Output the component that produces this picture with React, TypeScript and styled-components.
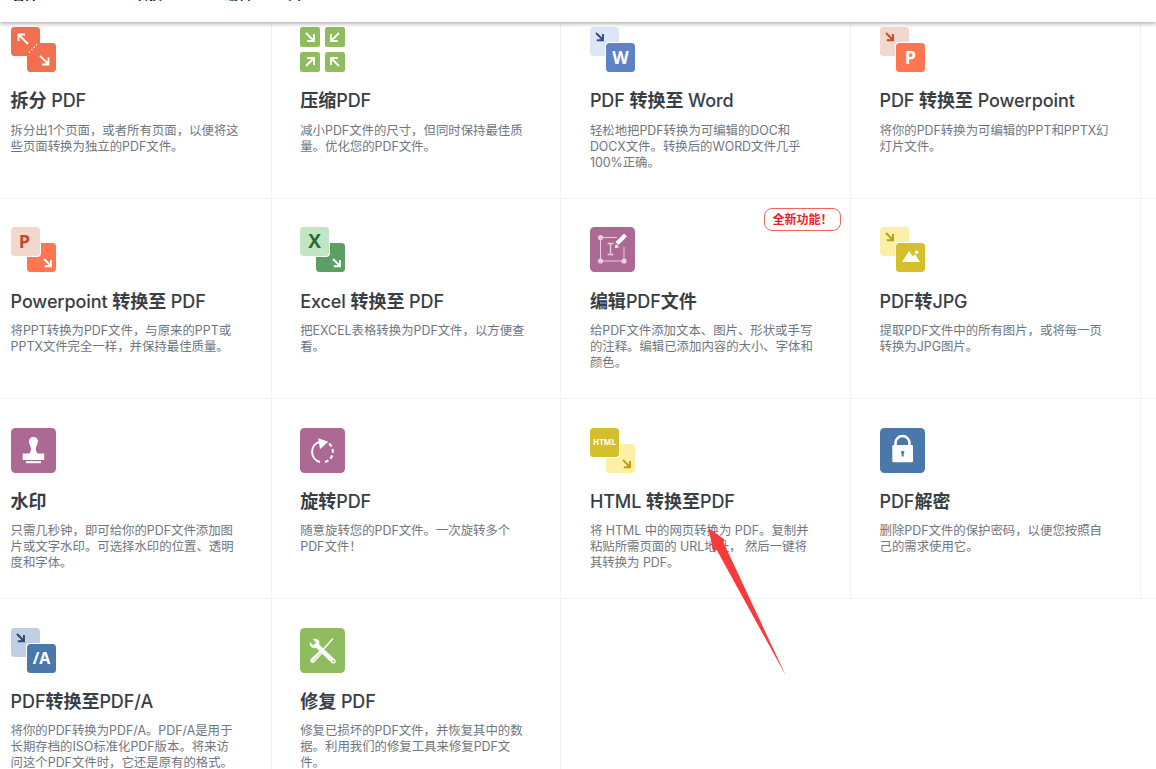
import React from 'react';
import styled, { createGlobalStyle } from 'styled-components';

const GlobalStyle = createGlobalStyle`
  html, body {
    margin: 0;
    padding: 0;
    height: 100%;
    background: #fff;
    overflow: hidden;
  }
  body {
    font-family: 'Inter', 'Noto Sans CJK SC', sans-serif;
  }
`;

const Page = styled.div`
  position: relative;
  width: 100%;
  height: 100vh;
  overflow: hidden;
`;

const Header = styled.header`
  position: relative;
  z-index: 2;
  height: 22px;
  display: flex;
  padding-left: 12px;
  background: #fff;
  box-shadow: 0 1px 5px rgba(0, 0, 0, 0.4);
  overflow: hidden;
`;

const NavItem = styled.span<{ $w: number }>`
  flex: none;
  width: ${(p) => p.$w}px;
  margin-top: -15px;
  font-size: 13px;
  line-height: 18px;
  font-weight: 700;
  color: #111;
`;

const Grid = styled.div`
  display: grid;
  grid-template-columns: repeat(5, 289.67px);
  grid-auto-rows: 200.2px;
  margin: -23.2px 0 0 -17.94px;
`;

const Cell = styled.div<{ $last?: boolean }>`
  position: relative;
  box-sizing: border-box;
  padding: 28.4px 20px 0 28.5px;
  border-right: 1px solid #f1f2f4;
  border-bottom: ${(p) => (p.$last ? 'none' : '1px solid #f1f2f4')};
`;

const Icon = styled.svg`
  display: block;
  width: 45px;
  height: 45px;
`;

const Title = styled.h3`
  margin: 17.25px 0 0;
  font-size: 18px;
  line-height: 24px;
  font-weight: 500;
  letter-spacing: -0.1px;
  color: #383e45;
  white-space: nowrap;
`;

const Cjk = styled.span`
  font-weight: 700;
  letter-spacing: 0;
`;

const Desc = styled.p`
  margin: 9.35px 0 0;
  font-size: 12.4px;
  line-height: 16px;
  color: #6f7680;
  white-space: pre;
`;

const Badge = styled.span`
  position: absolute;
  top: 9px;
  right: 9px;
  box-sizing: border-box;
  width: 77px;
  height: 23px;
  border: 1px solid #f4625a;
  border-radius: 8px;
  background: #fff;
  font-size: 12px;
  line-height: 21px;
  font-weight: 700;
  text-align: center;
  color: #ee1c25;
`;

const Annotation = styled.svg`
  position: absolute;
  z-index: 3;
  left: 700px;
  top: 520px;
  width: 95px;
  height: 165px;
`;

const IconLabel = styled.text<{ $size: number }>`
  font-family: 'Open Sans', sans-serif;
  font-size: ${(p) => p.$size}px;
  font-weight: 700;
  text-anchor: middle;
`;

// small diagonal arrow, points from top left to bottom right
const DownArrow = ({ x, y, color }: { x: number; y: number; color: string }) => (
  <path d={`M${x} ${y}l7 7M${x + 7} ${y + 1}v6.2h-6.2`} fill="none" stroke={color} strokeWidth="1.9" />
);

const Swap = ({ back, front, children }: { back: string; front: string; children: React.ReactNode }) => (
  <Icon viewBox="0 0 45 45">
    <rect width="29" height="29" rx="3.5" fill={back} />
    <rect x="15" y="15" width="30" height="30" rx="4" fill="#fff" />
    <rect x="16" y="16" width="29" height="29" rx="3.5" fill={front} />
    {children}
  </Icon>
);

// same as Swap, but the tile at the top left lies in front
const SwapOut = ({ back, front, arrow, children }: { back: string; front: string; arrow: string; children: React.ReactNode }) => (
  <Icon viewBox="0 0 45 45">
    <rect x="16" y="16" width="29" height="29" rx="3.5" fill={back} />
    <rect width="30" height="30" rx="4" fill="#fff" />
    <rect width="29" height="29" rx="3.5" fill={front} />
    <DownArrow x={33} y={32} color={arrow} />
    {children}
  </Icon>
);

const Flat = ({ color, children }: { color: string; children: React.ReactNode }) => (
  <Icon viewBox="0 0 45 45">
    <rect width="45" height="45" rx="4.5" fill={color} />
    {children}
  </Icon>
);

const SplitIcon = () => (
  <Icon viewBox="0 0 45 45">
    <rect width="29" height="29" rx="3.5" fill="#f2704f" />
    <rect x="16" y="16" width="29" height="29" rx="3.5" fill="#f2704f" />
    <path d="M7.5 7.5L17 17M7.5 14V7.5H14M29 29l8.5 8M37.5 30.5v7H31" fill="none" stroke="#fff" strokeWidth="1.8" />
    <path d="M18 25.5l8-8" fill="none" stroke="#fff" strokeWidth="1.2" strokeDasharray="1.4 2" />
  </Icon>
);

const CompressIcon = () => (
  <Icon viewBox="0 0 45 45">
    <rect width="20" height="20" rx="2.5" fill="#8fbc5e" />
    <rect x="25" width="20" height="20" rx="2.5" fill="#8fbc5e" />
    <rect y="25" width="20" height="20" rx="2.5" fill="#8fbc5e" />
    <rect x="25" y="25" width="20" height="20" rx="2.5" fill="#8fbc5e" />
    <path
      d="M6 6l8 8M14 7v7H7M39 6l-8 8M31 7v7h7M6 39l8-8M7 31h7v7M39 39l-8-8M38 31h-7v7"
      fill="none"
      stroke="#fff"
      strokeWidth="1.9"
    />
  </Icon>
);

const icons: Record<string, React.ReactNode> = {
  split: <SplitIcon />,
  compress: <CompressIcon />,
  word: (
    <Swap back="#dde5f8" front="#5f82c6">
      <DownArrow x={6} y={6} color="#2f4f8f" />
      <IconLabel $size={17} x="30.5" y="36.5" fill="#fff">W</IconLabel>
    </Swap>
  ),
  ppt: (
    <Swap back="#f2d8cc" front="#ff7650">
      <DownArrow x={6} y={6} color="#c9472a" />
      <IconLabel $size={18} x="30.5" y="37" fill="#fff">P</IconLabel>
    </Swap>
  ),
  pptOut: (
    <SwapOut back="#ff7650" front="#f2d8cc" arrow="#fff">
      <IconLabel $size={18} x="13.5" y="21" fill="#c9472a">P</IconLabel>
    </SwapOut>
  ),
  excelOut: (
    <SwapOut back="#5c9e63" front="#c2e5c4" arrow="#fff">
      <IconLabel $size={19} x="14.5" y="21" fill="#2a6e2e">X</IconLabel>
    </SwapOut>
  ),
  edit: (
    <Flat color="#ab6993">
      <path d="M10.5 10.5H27M10.5 10.5V34H34V20" fill="none" stroke="#e8cfdf" strokeWidth="1" />
      <circle cx="10.5" cy="10.5" r="2.6" fill="#e8cfdf" />
      <circle cx="10.5" cy="34" r="2.6" fill="#e8cfdf" />
      <circle cx="34" cy="34" r="2.6" fill="#e8cfdf" />
      <path d="M17.500 16.500h6M20.500 16.500v11M17.500 27.500h6" fill="none" stroke="#e8cfdf" strokeWidth="1.300" />
      <path d="M27 16.5L35.5 8" fill="none" stroke="#fff" strokeWidth="4" />
      <path d="M25 21l.8-4 3.2 3.2z" fill="#fff" />
    </Flat>
  ),
  jpg: (
    <Swap back="#fbf0a6" front="#d6bf2c">
      <DownArrow x={6} y={6} color="#b79f10" />
      <path d="M22 35l7-11 4 5.5 2-2.5 5 8z" fill="#fff" />
      <circle cx="36.7" cy="25.3" r="1.8" fill="#fff" />
    </Swap>
  ),
  stamp: (
    <Flat color="#ab6993">
      <path
        d="M22.500 9c2.600 0 4.500 2 4.500 4.400 0 3-2.200 4.400-2.200 7.400 0 1.800.8 3.400 1.800 4.600h6.600v6.600H11.700v-6.600h6.600c1-1.200 1.800-2.800 1.800-4.600 0-3-2.200-4.400-2.200-7.400C17.900 11 19.900 9 22.500 9z"
        fill="#fff"
      />
      <rect x="15" y="33.200" width="15" height="2" fill="#fff" />
    </Flat>
  ),
  rotate: (
    <Flat color="#ab6993">
      <path d="M19.500 13.800a10.500 10.500 0 0 0 .5 20.200" fill="none" stroke="#fff" strokeWidth="2" />
      <path
        d="M25 34a10.500 10.500 0 0 0 7.800-10.300A10.500 10.500 0 0 0 29 15.500"
        fill="none"
        stroke="#fff"
        strokeWidth="2"
        strokeDasharray="3.800 2.600"
      />
      <path d="M18.300 10.300L28.300 13.700L20 21.300z" fill="#fff" />
    </Flat>
  ),
  html: (
    <SwapOut back="#fbf0a6" front="#d6bf2c" arrow="#b79f10">
      <IconLabel $size={8} x="14.500" y="17" fill="#fff">HTML</IconLabel>
    </SwapOut>
  ),
  lock: (
    <Flat color="#4a78ab">
      <path d="M15.500 18v-3a7 7 0 0 1 14 0v3" fill="none" stroke="#fff" strokeWidth="2.600" />
      <rect x="12.300" y="17" width="20.700" height="17.300" rx="1" fill="#fff" />
      <circle cx="22.700" cy="24.300" r="1.600" fill="#4a78ab" />
      <rect x="21.700" y="24.500" width="2" height="4" fill="#4a78ab" />
    </Flat>
  ),
  pdfa: (
    <Swap back="#c0d0e4" front="#4a78ab">
      <DownArrow x={6} y={6} color="#2a4a70" />
      <IconLabel $size={16} x="30.500" y="36" fill="#fff">/A</IconLabel>
    </Swap>
  ),
  repair: (
    <Flat color="#8fbc5e">
      <path d="M33 10.500L21 24" fill="none" stroke="#fff" strokeWidth="1.500" />
      <path d="M21.500 21l2.800 2.800-9.800 10.500c-1.300 1-2.700.9-3.600-.1-.9-1-.9-2.300.1-3.500z" fill="#fff" />
      <path d="M13 33l8-8.500M15 34l7-7.500" stroke="#8fbc5e" strokeWidth="0.700" />
      <path
        d="M10 14l3.300 3.300 2.700-2.700L12.800 11.200c2.600-1.200 5.600-.2 6.400 2.300.3 1 .2 2-.1 2.900l15.900 15.200c1 1.100 1 2.400 0 3.300s-2.300.9-3.300 0L16 19.700c-1.100.4-2.300.4-3.400 0C10.200 18.800 9 16.300 10 14z"
        fill="#fff"
      />
      <circle cx="33.300" cy="33" r="1" fill="#8fbc5e" />
    </Flat>
  ),
};

interface Tool {
  icon: string;
  title: string;
  text: string;
  badge?: string;
}

const tools: (Tool | null)[] = [
  { icon: 'split', title: '拆分 PDF', text: '拆分出1个页面，或者所有页面，以便将这\n些页面转换为独立的PDF文件。' },
  { icon: 'compress', title: '压缩PDF', text: '减小PDF文件的尺寸，但同时保持最佳质\n量。优化您的PDF文件。' },
  { icon: 'word', title: 'PDF 转换至 Word', text: '轻松地把PDF转换为可编辑的DOC和\nDOCX文件。转换后的WORD文件几乎\n100%正确。' },
  { icon: 'ppt', title: 'PDF 转换至 Powerpoint', text: '将你的PDF转换为可编辑的PPT和PPTX幻\n灯片文件。' },
  null,
  { icon: 'pptOut', title: 'Powerpoint 转换至 PDF', text: '将PPT转换为PDF文件，与原来的PPT或\nPPTX文件完全一样，并保持最佳质量。' },
  { icon: 'excelOut', title: 'Excel 转换至 PDF', text: '把EXCEL表格转换为PDF文件，以方便查\n看。' },
  { icon: 'edit', title: '编辑PDF文件', text: '给PDF文件添加文本、图片、形状或手写\n的注释。编辑已添加内容的大小、字体和\n颜色。', badge: '全新功能！' },
  { icon: 'jpg', title: 'PDF转JPG', text: '提取PDF文件中的所有图片，或将每一页\n转换为JPG图片。' },
  null,
  { icon: 'stamp', title: '水印', text: '只需几秒钟，即可给你的PDF文件添加图\n片或文字水印。可选择水印的位置、透明\n度和字体。' },
  { icon: 'rotate', title: '旋转PDF', text: '随意旋转您的PDF文件。一次旋转多个\nPDF文件！' },
  { icon: 'html', title: 'HTML 转换至PDF', text: '将 HTML 中的网页转换为 PDF。复制并\n粘贴所需页面的 URL地址， 然后一键将\n其转换为 PDF。' },
  { icon: 'lock', title: 'PDF解密', text: '删除PDF文件的保护密码，以便您按照自\n己的需求使用它。' },
  null,
  { icon: 'pdfa', title: 'PDF转换至PDF/A', text: '将你的PDF转换为PDF/A。PDF/A是用于\n长期存档的ISO标准化PDF版本。将来访\n问这个PDF文件时，它还是原有的格式。' },
  { icon: 'repair', title: '修复 PDF', text: '修复已损坏的PDF文件，并恢复其中的数\n据。利用我们的修复工具来修复PDF文\n件。' },
];

// chinese runs of a title are bold, the latin ones are not
const ToolTitle = ({ text }: { text: string }) => (
  <Title>
    {text.split(/([\u4e00-\u9fff]+)/).map((part, i) =>
      i % 2 === 1 ? <Cjk key={i}>{part}</Cjk> : part
    )}
  </Title>
);

const App: React.FC = () => (
  <Page>
    <GlobalStyle />
    <Header>
      <NavItem $w={124}>合并</NavItem>
      <NavItem $w={89}>转换</NavItem>
      <NavItem $w={50}>编辑</NavItem>
      <NavItem $w={60}>工具</NavItem>
    </Header>
    <Grid>
      {tools.map((tool, i) =>
        tool ? (
          <Cell key={i} $last={i >= 15}>
            {tool.badge && <Badge>{tool.badge}</Badge>}
            {icons[tool.icon]}
            <ToolTitle text={tool.title} />
            <Desc>{tool.text}</Desc>
          </Cell>
        ) : (
          <Cell key={i} />
        )
      )}
    </Grid>
    <Annotation viewBox="700 520 95 165">
      <path d="M708.300 528L724.500 539.500L723.500 542.500L786 676L716.500 549.500L713.500 552z" fill="#f73b3b" />
    </Annotation>
  </Page>
);

export default App;
